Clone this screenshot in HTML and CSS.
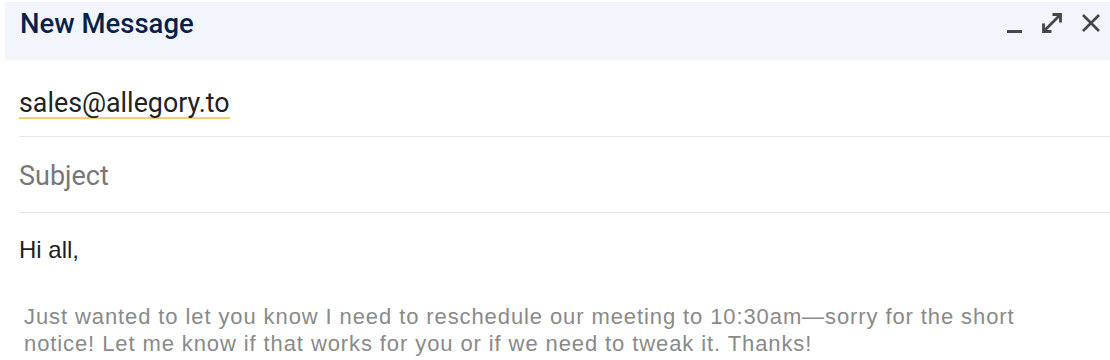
FILE: index.html
```html
<!DOCTYPE html>
<html lang="en">
<head>
  <meta charset="UTF-8" />
  <meta name="viewport" content="width=device-width, initial-scale=1.0" />
  <title>New Message</title>
  <link rel="stylesheet" href="styles.css">
</head>
<body>
  <div class="compose">
    <div class="compose-header">
      <h2 class="compose-title">New Message</h2>
      <div class="window-controls">
        <svg class="ctrl" viewBox="0 0 24 24" aria-label="Minimize">
          <rect x="6" y="19" width="15" height="3" fill="#444746" />
        </svg>
        <svg class="ctrl" viewBox="0 0 24 24" aria-label="Full screen">
          <path d="M12.5 3.5h8v8M20.5 3.5L3.5 20.5M3.5 12.5v8h8" fill="none" stroke="#444746" stroke-width="2.8" />
        </svg>
        <svg class="ctrl" viewBox="0 0 24 24" aria-label="Close">
          <path d="M4 4L20 20M20 4L4 20" fill="none" stroke="#444746" stroke-width="2.6" />
        </svg>
      </div>
    </div>

    <div class="fields">
      <div class="field field-to">
        <span class="recipient">sales@allegory.to</span>
      </div>
      <div class="field field-subject">Subject</div>

      <div class="message">
        <div class="greeting">Hi all,</div>
        <p class="body-text">Just wanted to let you know I need to reschedule our meeting to 10:30am—sorry for the short notice! Let me know if that works for you or if we need to tweak it. Thanks!</p>
      </div>
    </div>
  </div>
</body>
</html>
```

FILE: styles.css
```css
body {
  margin: 0;
  background: #fff;
}
.compose {
  padding-top: 2px;
}
.compose-header {
  display: flex;
  justify-content: space-between;
  align-items: flex-start;
  margin-left: 5px;
  height: 58px;
  padding: 6px 7px 0 15px;
  box-sizing: border-box;
  background-color: #f2f6fc;
}
.compose-title {
  margin: 0;
  font-family: Roboto, "Liberation Sans", sans-serif;
  font-size: 27.5px;
  font-weight: 500;
  line-height: 32px;
  color: #0b1f4b;
}
.window-controls {
  display: flex;
  gap: 15px;
  margin-top: 3px;
}
.ctrl {
  width: 24px;
  height: 24px;
}
.fields {
  padding-left: 19px;
}
.field {
  font-family: Roboto, "Liberation Sans", sans-serif;
  font-size: 26.8px;
  line-height: 28px;
  border-bottom: 1px solid #e6e6e6;
}
.field-to {
  padding: 29px 0 17px;
  color: #222;
}
.recipient {
  display: inline-block;
  border-bottom: 2px solid #f2cf6c;
}
.field-subject {
  padding: 25px 0 22px;
  font-size: 27px;
  color: #777;
}
.message {
  padding: 24px 40px 0 0;
  font-family: "Liberation Sans", Arial, sans-serif;
}
.greeting {
  font-size: 24px;
  line-height: 26px;
  color: #1f1f1f;
}
.body-text {
  margin: 40px 0 0 5px;
  font-size: 22px;
  line-height: 27px;
  letter-spacing: 0.9px;
  color: #8a8a8a;
}
```
